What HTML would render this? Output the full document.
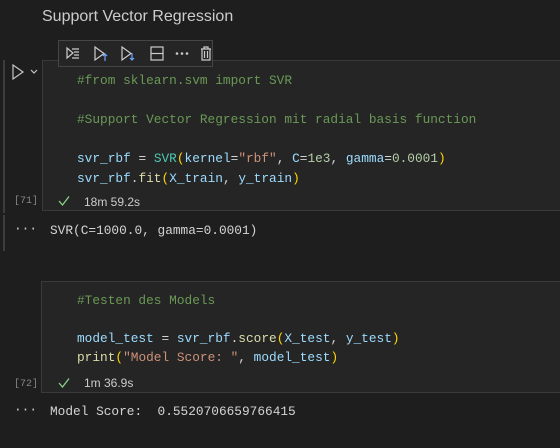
<!DOCTYPE html>
<html><head><style>
body{margin:0;width:560px;height:448px;background:#1e1e1e;position:relative;overflow:hidden;font-family:"Liberation Mono",monospace;}
.a{position:absolute}
.mono{font-family:"Liberation Mono",monospace;font-size:12.8px;white-space:pre;color:#d4d4d4;line-height:19.5px}
.sans{font-family:"Liberation Sans",sans-serif}
.c{color:#6a9955}.v{color:#9cdcfe}.t{color:#4ec9b0}.p{color:#ffd700}.s{color:#ce9178}.n{color:#b5cea8}.f{color:#dcdcaa}
</style></head><body>
<div class="a sans" style="left:42px;top:8px;font-size:16px;color:#cccccc">Support Vector Regression</div>
<div class="a" style="left:3px;top:60px;width:2px;height:153px;background:#3c3c3c"></div>
<div class="a" style="left:3px;top:215px;width:2px;height:36px;background:#3c3c3c"></div>
<div class="a" style="left:42px;top:60px;width:520px;height:151px;background:#252526;border:1px solid #3a3a3a;box-sizing:border-box"></div>
<div class="a" style="left:41px;top:281px;width:521px;height:112px;background:#252526;border:1px solid #3a3a3a;box-sizing:border-box"></div>
<!-- toolbar -->
<div class="a" style="left:58px;top:40px;width:155px;height:27px;background:#252526;border:1px solid #454545;box-sizing:border-box"></div>
<svg class="a" style="left:58px;top:40px" width="155" height="27" fill="none" stroke="#cccccc" stroke-width="1.2">
<path d="M9 8 L15 13 L9 18 Z"/><path d="M14 9h7M16 12h5M16 15h5M14 18h7"/>
<path d="M37 7 L46 13.5 L37 20 Z"/><path d="M47 21v-7M45 16l2-2 2 2" stroke="#6fa8ff"/>
<path d="M64 7 L73 13.5 L64 20 Z"/><path d="M74 13v7M72 18l2 2 2-2" stroke="#6fa8ff"/>
<rect x="93" y="7" width="12" height="13"/><path d="M93 13.5h12"/>
<circle cx="119" cy="13.5" r=".7" fill="#ccc"/><circle cx="124" cy="13.5" r=".7" fill="#ccc"/><circle cx="129" cy="13.5" r=".7" fill="#ccc"/>
<path d="M143 9h10M146 9V7h4v2M144 9v11h8V9M146.5 11v7M149.5 11v7"/>
</svg>
<svg class="a" style="left:10px;top:63px" width="32" height="18" fill="none" stroke="#c5c5c5" stroke-width="1.2">
<path d="M3 2 L13 9 L3 16 Z"/><path d="M21 7l3 3 3-3"/>
</svg>
<div class="a mono" style="left:77px;top:71px"><span class="c">#from sklearn.svm import SVR</span>

<span class="c">#Support Vector Regression mit radial basis function</span>

<span class="v">svr_rbf</span> = <span class="t">SVR</span><span class="p">(</span><span class="v">kernel</span>=<span class="s">"rbf"</span>, <span class="v">C</span>=<span class="n">1e3</span>, <span class="v">gamma</span>=<span class="n">0.0001</span><span class="p">)</span>
<span class="v">svr_rbf</span>.<span class="f">fit</span><span class="p">(</span><span class="v">X_train</span>, <span class="v">y_train</span><span class="p">)</span></div>
<div class="a mono" style="left:14px;top:192px;font-size:10px;color:#858585">[71]</div>
<svg class="a" style="left:58px;top:195px" width="12" height="12" fill="none" stroke="#89d185" stroke-width="1.3"><path d="M1 6l3.5 4L11 1.5"/></svg>
<div class="a sans" style="left:84px;top:195px;font-size:12px;color:#cccccc">18m 59.2s</div>
<div class="a mono" style="left:14px;top:219px;color:#cccccc">···</div>
<div class="a mono" style="left:50px;top:221px">SVR(C=1000.0, gamma=0.0001)</div>
<div class="a mono" style="left:77px;top:291px;line-height:19px"><span class="c">#Testen des Models</span>

<span class="v">model_test</span> = <span class="v">svr_rbf</span>.<span class="f">score</span><span class="p">(</span><span class="v">X_test</span>, <span class="v">y_test</span><span class="p">)</span>
<span class="f">print</span><span class="p">(</span><span class="s">"Model Score: "</span>, <span class="v">model_test</span><span class="p">)</span></div>
<div class="a mono" style="left:14px;top:375px;font-size:10px;color:#858585">[72]</div>
<svg class="a" style="left:58px;top:377px" width="12" height="12" fill="none" stroke="#89d185" stroke-width="1.3"><path d="M1 6l3.5 4L11 1.5"/></svg>
<div class="a sans" style="left:84px;top:376px;font-size:12px;color:#cccccc">1m 36.9s</div>
<div class="a mono" style="left:14px;top:400px;color:#cccccc">···</div>
<div class="a mono" style="left:50px;top:402px">Model Score:  0.5520706659766415</div>
</body></html>
